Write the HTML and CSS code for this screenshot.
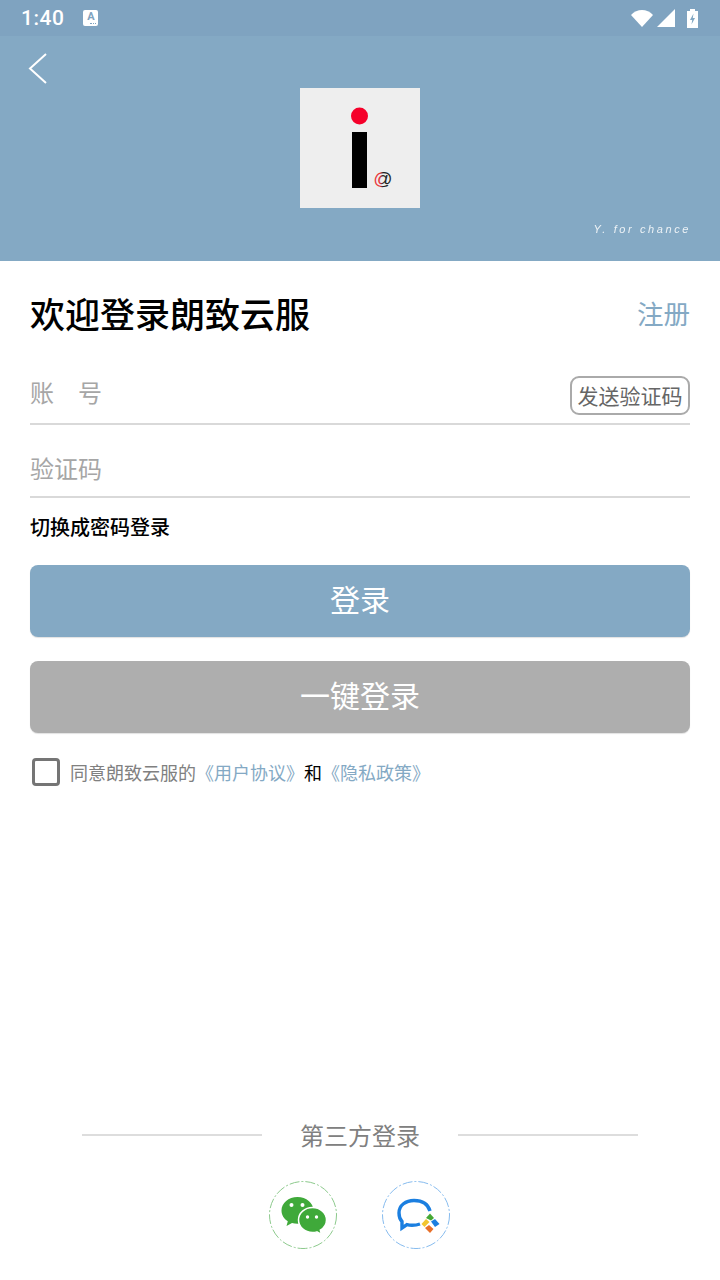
FILE: index.html
```html
<!DOCTYPE html>
<html lang="zh-CN">
<head>
  <meta charset="UTF-8">
  <meta name="viewport" content="width=device-width, initial-scale=1.0">
  <title>欢迎登录朗致云服</title>
  <link rel="stylesheet" href="styles.css">
</head>
<body>
  <div class="page">
    <div class="status-bar">
      <span class="time">1:40</span>
      <span class="a-icon">A</span>
      <div class="status-right">
        <svg class="wifi" width="24" height="18" viewBox="0 0 24 18"><path d="M1 6C4 2.800 8 1 12 1s8 1.800 11 5L12 18z" fill="#fff"/></svg>
        <svg class="signal" width="18" height="18" viewBox="0 0 18 18"><path d="M18 0v18H0z" fill="#fff"/></svg>
        <svg width="11" height="19" viewBox="0 0 11 19"><path d="M3 0h5v2h3v17H0V2h3z" fill="#fff"/><path d="M6.500 4.500L3 11h2.200l-.7 4.500L8 9H5.800z" fill="#83a8c3"/></svg>
      </div>
    </div>

    <div class="header">
      <svg class="back" width="22" height="34" viewBox="0 0 22 34"><path d="M19 3L3 17.500 19 32" fill="none" stroke="#fff" stroke-width="2"/></svg>
      <div class="logo">
        <svg width="120" height="120" viewBox="0 0 120 120">
          <defs>
            <linearGradient id="atFill" x1="0" y1="0" x2="1" y2="0">
              <stop offset="0.35" stop-color="#e8333a"/>
              <stop offset="0.5" stop-color="#222"/>
            </linearGradient>
          </defs>
          <rect width="120" height="120" fill="#eeeeee"/>
          <circle cx="59.500" cy="28" r="8.500" fill="#f5002a"/>
          <rect x="52" y="44" width="15" height="56" fill="#000"/>
          <text x="83" y="97" class="logo-at" fill="url(#atFill)">@</text>
        </svg>
      </div>
      <span class="slogan">Y. for chance</span>
    </div>

    <div class="content">
      <div class="title-row">
        <h1>欢迎登录朗致云服</h1>
        <a class="register">注册</a>
      </div>

      <div class="field field-account">
        <span class="field-label">账　号</span>
        <span class="send-code">发送验证码</span>
      </div>
      <div class="field field-code">
        <span class="field-label">验证码</span>
      </div>
      <div class="switch-mode">切换成密码登录</div>

      <button class="btn btn-login">登录</button>
      <button class="btn btn-quick">一键登录</button>

      <div class="agree">
        <span class="checkbox"></span>
        <span class="agree-text">同意朗致云服的<a>《用户协议》</a><b>和</b><a>《隐私政策》</a></span>
      </div>
    </div>

    <div class="third">
      <div class="third-title">
        <span class="third-line"></span>
        <span>第三方登录</span>
        <span class="third-line"></span>
      </div>
      <div class="third-icons">
        <svg width="70" height="70" viewBox="0 0 70 70">
          <circle cx="35" cy="35" r="33.500" fill="none" stroke="#8cc98c" stroke-width="1" stroke-dasharray="10 2 2 2"/>
          <path d="M29.500 17C20.500 17 13.500 23 13.500 30.500c0 4.500 2.500 8.300 6.300 10.700L18.500 46l5.500-3c1.800.5 3.600.8 5.500.8 8.800 0 16-6 16-13.300S38.300 17 29.500 17z" fill="#3fa93a"/>
          <path d="M58.500 40c0-6.900-6.300-12.500-14-12.500S30.500 33.100 30.500 40s6.300 12.500 14 12.500c1.500 0 3-.2 4.400-.6l4.600 2.600-1.200-4.300c3.700-2.300 6.200-6 6.200-10.200z" fill="#3fa93a" stroke="#fff" stroke-width="1.500"/>
          <circle cx="23.500" cy="25" r="2" fill="#fff"/><circle cx="34.500" cy="25" r="2" fill="#fff"/>
          <circle cx="39.500" cy="37" r="1.700" fill="#fff"/><circle cx="48.500" cy="37" r="1.700" fill="#fff"/>
        </svg>
        <svg width="70" height="70" viewBox="0 0 70 70">
          <circle cx="35" cy="35" r="33.500" fill="none" stroke="#86bbee" stroke-width="1" stroke-dasharray="10 2 2 2"/>
          <path d="M39 44c-2.500.9-5 1.300-8 1.300-2 0-3.500-.2-5-.6l-5 3.300v-6.500c-2.500-2.500-3-5-3-8.500C18 25 25 20.500 33 20.500S47 24 49 31" fill="none" stroke="#1b7fe0" stroke-width="3.400"/>
          <path d="M45 38l4-4.500 4 4.500-3 2.500z" fill="#45a834"/>
          <path d="M50 41.500l4-2.500 4.500 5-4.500 3z" fill="#1b7fe0"/>
          <path d="M44 48l4-3 4.500 4-3.500 4z" fill="#e8702a"/>
          <path d="M40.500 44l4.500-5 3.500 3-5 5z" fill="#f2c52e"/>
        </svg>
      </div>
    </div>
  </div>
</body>
</html>
```

FILE: styles.css
```css
* {
  box-sizing: border-box;
}

body {
  margin: 0;
  background-color: #fff;
  font-family: "Noto Sans CJK SC", "Noto Sans", sans-serif;
}

.page {
  width: 720px;
  height: 1280px;
  display: flex;
  flex-direction: column;
  overflow: hidden;
}

.status-bar {
  height: 36px;
  background-color: #7fa3c0;
  color: #fff;
  display: flex;
  align-items: center;
  padding: 0 22px 0 21px;
}

.time {
  font-family: Roboto, sans-serif;
  font-size: 21px;
  font-weight: 500;
  letter-spacing: 0.5px;
}

.a-icon {
  position: relative;
  width: 15px;
  height: 16px;
  margin-left: 19px;
  background-color: #fff;
  border-radius: 2px;
  color: #7fa3c0;
  font-family: Roboto, sans-serif;
  font-size: 11px;
  font-weight: 700;
  line-height: 14px;
  text-align: center;
}

.a-icon::after {
  content: "";
  position: absolute;
  right: 2px;
  bottom: 2px;
  width: 6px;
  border-bottom: 1px dotted #7fa3c0;
}

.status-right {
  margin-left: auto;
  display: flex;
  align-items: center;
}

.signal {
  margin-left: 3px;
  margin-right: 12px;
}

.header {
  position: relative;
  height: 225px;
  background-color: #84a9c4;
}

.back {
  position: absolute;
  left: 27px;
  top: 15px;
}

.logo {
  position: absolute;
  left: 300px;
  top: 52px;
  width: 120px;
  height: 120px;
}

.logo svg {
  display: block;
}

.logo-at {
  font-family: "Liberation Sans", sans-serif;
  font-size: 19px;
  text-anchor: middle;
}

.slogan {
  position: absolute;
  right: 29px;
  top: 187px;
  color: #fff;
  font-family: "Liberation Sans", sans-serif;
  font-size: 11px;
  font-style: italic;
  letter-spacing: 2.6px;
  opacity: 0.85;
}

.content {
  padding: 0 30px;
}

.title-row {
  height: 108px;
  padding-bottom: 6px;
  display: flex;
  justify-content: space-between;
  align-items: center;
}

h1 {
  margin: 0;
  font-size: 35px;
  font-weight: 500;
  color: #000;
}

.register {
  color: #84a9c4;
  font-size: 26.5px;
}

.field {
  display: flex;
  justify-content: space-between;
  align-items: center;
  border-bottom: 2px solid #d9d9d9;
}

.field-account {
  height: 56px;
  padding-bottom: 8px;
}

.field-account .field-label {
  margin-bottom: 2px;
}

.field-code {
  height: 73px;
  padding-top: 13px;
}

.field-label {
  color: #a6a6a6;
  font-size: 24px;
}

.send-code {
  align-self: flex-end;
  width: 120px;
  height: 39px;
  border: 2px solid #aaa;
  border-radius: 9px;
  color: #666;
  font-size: 21px;
  line-height: 35px;
  text-align: center;
  white-space: nowrap;
}

.switch-mode {
  margin-top: 15px;
  color: #000;
  font-size: 20px;
  font-weight: 500;
  line-height: 28px;
}

.btn {
  display: block;
  width: 100%;
  height: 72px;
  padding: 0 0 6px;
  border: none;
  border-radius: 8px;
  color: #fff;
  font-family: inherit;
  font-size: 30px;
  box-shadow: 0 1px 1px rgba(0, 0, 0, 0.12);
}

.btn-login {
  margin-top: 24px;
  background-color: #84a9c4;
}

.btn-quick {
  margin-top: 24px;
  background-color: #aeaeae;
}

.agree {
  margin-top: 24px;
  padding-left: 2px;
  display: flex;
  align-items: center;
  gap: 10px;
  height: 30px;
}

.checkbox {
  width: 28px;
  height: 28px;
  border: 3px solid #757575;
  border-radius: 4px;
}

.agree-text {
  color: #808080;
  font-size: 18px;
}

.agree-text a {
  color: #84a9c4;
}

.agree-text b {
  color: #000;
  font-weight: 400;
}

.third {
  margin-top: auto;
  padding-bottom: 30px;
}

.third-title {
  display: flex;
  justify-content: center;
  align-items: center;
  gap: 38px;
  color: #808080;
  font-size: 24px;
}

.third-line {
  width: 180px;
  height: 2px;
  background-color: #ddd;
}

.third-icons {
  margin-top: 28px;
  padding-right: 2px;
  display: flex;
  justify-content: center;
  gap: 43px;
}

.third-icons svg {
  filter: blur(0.4px);
}
```
